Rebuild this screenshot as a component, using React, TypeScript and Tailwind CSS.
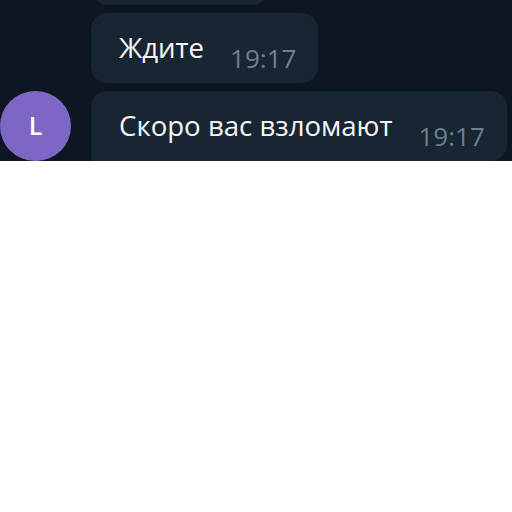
export default function App() {
  return (
    <div className="bg-white w-[512px] h-[512px]">
      <div className="relative h-[161px] overflow-hidden bg-[#0e1621] font-['Open_Sans',sans-serif]">
        <div className="flex flex-col gap-2 pl-[91px] -mt-[40px]">
          {/* previous message, mostly scrolled off */}
          <div className="ml-px h-[45px] w-[176px] rounded-2xl bg-[#182533]" />
          <Bubble text="Ждите" time="19:17" />
          <div className="flex items-end">
            <div className="-ml-[91px] mr-[20px] flex h-[70px] w-[71px] flex-none items-center justify-center rounded-full bg-[#7e66c7] text-[25px] font-semibold text-white">
              L
            </div>
            <Bubble text="Скоро вас взломают" time="19:17" last />
          </div>
        </div>
      </div>
    </div>
  );
}

function Bubble({ text, time, last }: { text: string; time: string; last?: boolean }) {
  return (
    <div
      className={`flex h-[70px] w-fit items-center rounded-2xl bg-[#182533] pl-[28px] pr-[22px] ${
        last ? "rounded-bl-none" : ""
      }`}
    >
      <span className="text-[27.6px] font-medium leading-none text-[#f7f7f7]">{text}</span>
      <span className="ml-[26px] mt-[20px] text-[26px] leading-none text-[#6d7f8f]">{time}</span>
    </div>
  );
}
